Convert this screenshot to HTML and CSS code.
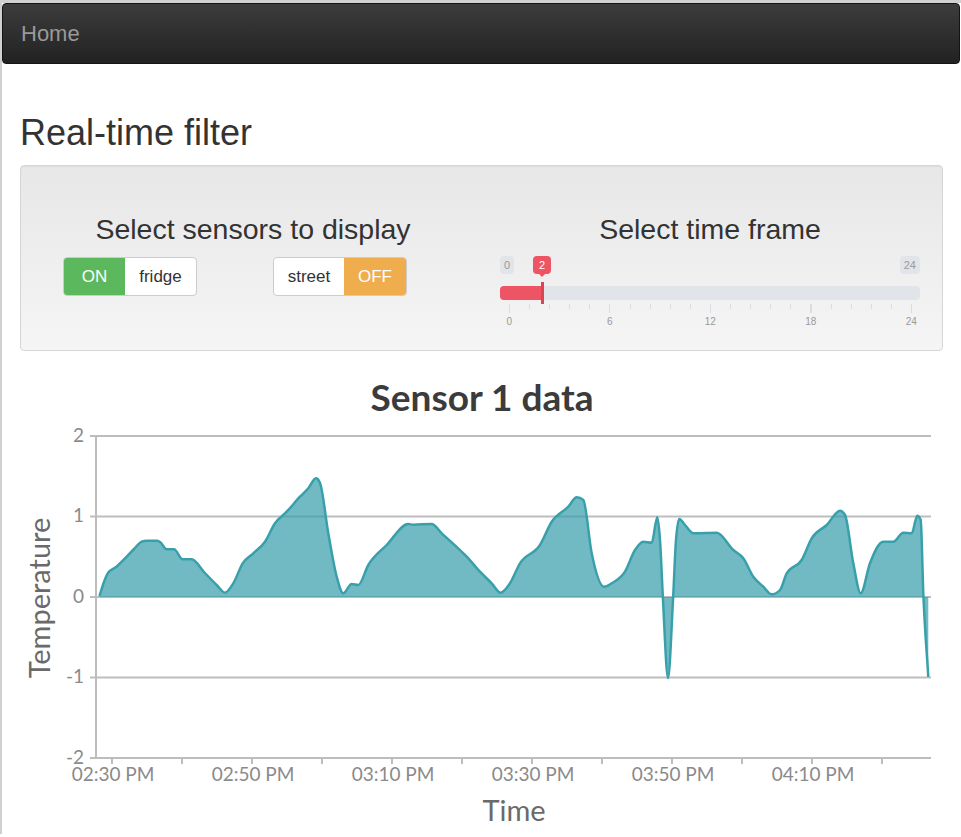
FILE: index.html
```html
<!DOCTYPE html>
<html lang="en">
<head>
<meta charset="utf-8">
<title>Real-time filter</title>
<link rel="stylesheet" href="styles.css">
</head>
<body>
<div class="frame">
  <nav class="navbar"><a class="brand" href="#">Home</a></nav>
  <main class="container">
    <h1 class="page-title">Real-time filter</h1>
    <section class="well">
      <div class="col">
        <h3 class="col-title">Select sensors to display</h3>
        <div class="switches">
          <div class="switch">
            <span class="sw-on">ON</span><span class="sw-label">fridge</span>
          </div>
          <div class="switch">
            <span class="sw-label">street</span><span class="sw-off">OFF</span>
          </div>
        </div>
      </div>
      <div class="col">
        <h3 class="col-title">Select time frame</h3>
        <div class="irs">
          <span class="irs-min">0</span>
          <span class="irs-max">24</span>
          <span class="irs-single">2</span>
          <span class="irs-line"></span>
          <span class="irs-bar"></span>
          <span class="irs-handle"></span>
          <div class="irs-grid">
            <span class="irs-minor"></span>
            <span class="irs-major"></span>
            <div class="irs-grid-text"><span>0</span><span>6</span><span>12</span><span>18</span><span>24</span></div>
          </div>
        </div>
      </div>
    </section>
    <svg class="chart" width="923" height="472" viewBox="20 365 923 472" xmlns="http://www.w3.org/2000/svg">
      <text class="chart-title" x="482" y="411" text-anchor="middle">Sensor 1 data</text>
      <g class="grid">
        <line x1="90" y1="436" x2="931" y2="436"/>
        <line x1="90" y1="516.5" x2="931" y2="516.5"/>
        <line x1="90" y1="597" x2="931" y2="597"/>
        <line x1="90" y1="677.5" x2="931" y2="677.5"/>
        <line x1="90" y1="758" x2="931" y2="758"/>
        <line x1="96" y1="435" x2="96" y2="759"/>
      </g>
      <g class="ticks">
        <line x1="112" y1="758" x2="112" y2="764"/>
        <line x1="182" y1="758" x2="182" y2="764"/>
        <line x1="252" y1="758" x2="252" y2="764"/>
        <line x1="322" y1="758" x2="322" y2="764"/>
        <line x1="392" y1="758" x2="392" y2="764"/>
        <line x1="462" y1="758" x2="462" y2="764"/>
        <line x1="532" y1="758" x2="532" y2="764"/>
        <line x1="602" y1="758" x2="602" y2="764"/>
        <line x1="672" y1="758" x2="672" y2="764"/>
        <line x1="742" y1="758" x2="742" y2="764"/>
        <line x1="812" y1="758" x2="812" y2="764"/>
        <line x1="882" y1="758" x2="882" y2="764"/>
      </g>
      <path id="area" class="area" d=""/>
      <path id="line" class="line" d=""/>
      <g class="tick-labels y-labels">
        <text x="84" y="442" text-anchor="end">2</text>
        <text x="84" y="522" text-anchor="end">1</text>
        <text x="84" y="603" text-anchor="end">0</text>
        <text x="84" y="683" text-anchor="end">-1</text>
        <text x="84" y="764" text-anchor="end">-2</text>
      </g>
      <g class="tick-labels x-labels">
        <text x="113" y="781" text-anchor="middle">02:30 PM</text>
        <text x="253" y="781" text-anchor="middle">02:50 PM</text>
        <text x="393" y="781" text-anchor="middle">03:10 PM</text>
        <text x="533" y="781" text-anchor="middle">03:30 PM</text>
        <text x="673" y="781" text-anchor="middle">03:50 PM</text>
        <text x="813" y="781" text-anchor="middle">04:10 PM</text>
      </g>
      <text class="axis-title" x="514" y="821" text-anchor="middle">Time</text>
      <text class="axis-title" transform="translate(50 598) rotate(-90)" text-anchor="middle">Temperature</text>
    </svg>
  </main>
</div>
<script src="chart.js"></script>
</body>
</html>
```

FILE: styles.css
```css
html, body {
  margin: 0;
  padding: 0;
  background: #fff;
  overflow: hidden;
}
body {
  font-family: "Liberation Sans", Arial, sans-serif;
  color: #333;
}
.frame {
  border-top: 3px solid #d0d0d0;
  border-left: 2px solid #d0d0d0;
  height: 834px;
  box-sizing: border-box;
}
.navbar {
  margin-right: 1px;
  height: 59px;
  border: 1px solid #141414;
  border-radius: 4px;
  background: linear-gradient(to bottom, #3c3c3c, #222);
  display: flex;
  align-items: center;
}
.brand {
  padding-left: 18px;
  font-size: 22px;
  line-height: 59px;
  color: #999;
  text-decoration: none;
}
.container {
  padding: 0 18px;
}
.page-title {
  margin: 49px 0 12px;
  font-size: 36px;
  line-height: 40px;
  font-weight: normal;
  color: #333;
}
.well {
  display: grid;
  grid-template-columns: 440px 440px;
  column-gap: 17px;
  padding: 47px 12px 0;
  box-sizing: content-box;
  height: 137px;
  border: 1px solid #d6d6d6;
  border-radius: 4px;
  background: linear-gradient(to bottom, #e7e7e7, #f5f5f5);
  box-shadow: inset 0 1px 1px rgba(0,0,0,0.04);
}
.col-title {
  margin: 0;
  text-align: center;
  font-size: 28.5px;
  line-height: 32px;
  font-weight: normal;
  color: #333;
}
.switches {
  display: flex;
  gap: 76px;
  margin: 12px 0 0 30px;
}
.switch {
  display: flex;
  height: 37px;
  border: 1px solid #ccc;
  border-radius: 4px;
  overflow: hidden;
  background: #fff;
  font-size: 17px;
  line-height: 37px;
}
.switch span {
  text-align: center;
}
.sw-on {
  width: 61px;
  background: #5cb85c;
  color: #fff;
}
.sw-off {
  width: 62px;
  background: #f0ad4e;
  color: #fff;
}
.switch:first-child .sw-label { width: 71px; }
.switch:last-child .sw-label { width: 70px; }

/* range slider */
.irs {
  position: relative;
  height: 74px;
  margin: 11px 10px 0;
  font-size: 11px;
}
.irs-min, .irs-max, .irs-single {
  position: absolute;
  top: 0;
  height: 18px;
  line-height: 18px;
  padding: 0 4px;
  border-radius: 4px;
  background: #e1e4e9;
  color: #999;
}
.irs-min { left: 0; }
.irs-max { right: 0; }
.irs-single {
  left: 33px;
  padding: 0 6px;
  background: #ed5565;
  color: #fff;
}
.irs-single::before {
  content: "";
  position: absolute;
  left: 50%;
  bottom: -3px;
  margin-left: -3px;
  border: 3px solid transparent;
  border-top-color: #ed5565;
  border-bottom: 0;
}
.irs-line, .irs-bar {
  position: absolute;
  top: 30px;
  height: 14px;
  border-radius: 4px;
}
.irs-line {
  left: 0;
  right: 0;
  background: #e1e4e9;
}
.irs-bar {
  left: 0;
  width: 42px;
  background: #ed5565;
  border-radius: 4px 0 0 4px;
}
.irs-handle {
  position: absolute;
  top: 26px;
  left: 41px;
  width: 3px;
  height: 22px;
  background: #da4453;
}
.irs-grid {
  position: absolute;
  top: 48px;
  left: 9px;
  width: 403px;
  height: 26px;
}
.irs-minor, .irs-major {
  position: absolute;
  top: 0;
  left: 0;
  width: 403px;
}
.irs-minor {
  height: 5px;
  background: repeating-linear-gradient(to right, #d9dce1 0 1px, transparent 1px 20.1px);
}
.irs-major {
  height: 9px;
  background: repeating-linear-gradient(to right, #d9dce1 0 1px, transparent 1px 100.5px);
}
.irs-grid-text {
  position: absolute;
  top: 12px;
  left: -50px;
  display: grid;
  grid-template-columns: repeat(5, 100.5px);
  font-size: 10px;
  line-height: 12px;
  color: #999;
  text-align: center;
}

/* chart */
.chart {
  display: block;
  margin-top: 14px;
}
.chart-title {
  font-family: Lato, "Liberation Sans", sans-serif;
  font-weight: 700;
  font-size: 37px;
  fill: #3b3b3b;
}
.grid line, .ticks line {
  stroke: #bdbdbd;
  stroke-width: 2;
}
.area {
  fill: rgb(54, 156, 169);
  fill-opacity: 0.7;
  stroke: none;
}
.line {
  fill: none;
  stroke: #38a0ab;
  stroke-width: 2.5;
  stroke-linejoin: round;
}
.tick-labels text {
  font-family: Lato, "Liberation Sans", sans-serif;
  font-size: 19px;
  fill: #8a8a8a;
}
.axis-title {
  font-family: Lato, "Liberation Sans", sans-serif;
  font-size: 29px;
  fill: #6a6a6a;
}
```

FILE: chart.js
```js
(function () {
  var pts = [
    [99.5,596],[104,582],[108,573],[116.7,566.5],[126.7,556.7],[134,549],[141.7,541.7],[146.7,540.7],
    [156.7,540.7],[160,542],[166.7,549.3],[174,549.3],[182.7,559.3],[191.7,559.3],[204,572],[216.7,585],
    [225,592.7],[233.3,583.3],[242.7,563.3],[253.3,553.3],[265,541.7],[275,523.3],[286.7,511.7],[300,496.7],
    [308.3,488.3],[316,478.3],[320,483],[328.3,533.3],[336.7,576.7],[343.3,593.3],[351.7,584],[358.3,585],
    [368.3,565],[386.7,545],[408.3,524],[413.3,524.7],[431.7,524],[441.7,533.3],[466.7,556.7],[480,571.7],
    [491.7,583.3],[500.7,592.7],[510,583.3],[520,563.3],[540,545],[551.7,521.7],[568.3,506.7],[576.7,497.3],
    [583.3,500],[591.7,553.3],[604,586.7],[611.7,583.3],[625,571.7],[635,550],[643.3,541.7],[651.7,542.7],
    [657.3,517.3],[660,540],[663,600],[668,678],[673,600],[676,540],[679.3,519],[685,525],[693.3,533.3],
    [716.7,532.7],[733.3,550],[743.3,558.3],[753.3,576.7],[763.3,586.7],[771.7,594.3],[780,590],[786.7,573.3],
    [801.7,560],[811.7,538.3],[826.7,525],[840,510.7],[845,515],[853.3,563.3],[860.7,593.3],[870,563.3],
    [883.3,541.7],[893.3,541.7],[903.3,532.7],[911.7,533.3],[917.3,515.7],[920.7,520],[923.3,593.3],[928.3,677]
  ];
  var n = pts.length, s = [], m = [], i;
  for (i = 0; i < n - 1; i++) s[i] = (pts[i + 1][1] - pts[i][1]) / (pts[i + 1][0] - pts[i][0]);
  m[0] = s[0];
  m[n - 1] = s[n - 2];
  for (i = 1; i < n - 1; i++) {
    var h0 = pts[i][0] - pts[i - 1][0], h1 = pts[i + 1][0] - pts[i][0];
    var s0 = s[i - 1], s1 = s[i];
    var p = (s0 * h1 + s1 * h0) / (h0 + h1);
    m[i] = (Math.sign(s0) + Math.sign(s1)) * Math.min(Math.abs(s0), Math.abs(s1), 0.5 * Math.abs(p)) || 0;
  }
  var seg = "";
  for (i = 0; i < n - 1; i++) {
    var x0 = pts[i][0], y0 = pts[i][1], x1 = pts[i + 1][0], y1 = pts[i + 1][1];
    var dx = (x1 - x0) / 3;
    seg += " C" + (x0 + dx).toFixed(2) + "," + (y0 + dx * m[i]).toFixed(2) + " " +
      (x1 - dx).toFixed(2) + "," + (y1 - dx * m[i + 1]).toFixed(2) + " " + x1 + "," + y1;
  }
  var start = pts[0], end = pts[n - 1];
  document.getElementById("line").setAttribute("d", "M" + start[0] + "," + start[1] + seg);
  document.getElementById("area").setAttribute("d",
    "M" + start[0] + ",597 L" + start[0] + "," + start[1] + seg + " L" + end[0] + ",597 Z");
})();
```
